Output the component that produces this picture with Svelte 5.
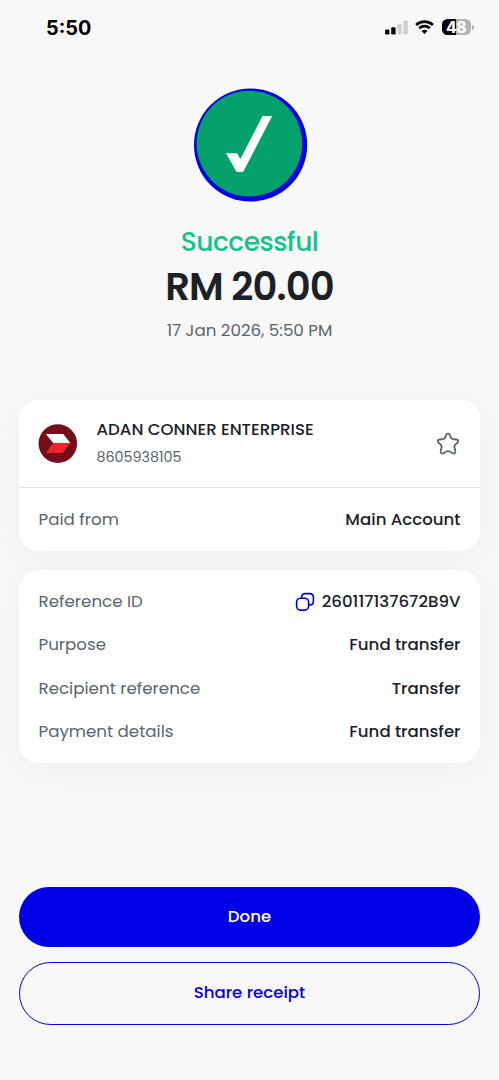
<script lang="ts">
	interface Detail {
		label: string;
		value: string;
		copy?: boolean;
	}

	const details: Detail[] = [
		{ label: 'Reference ID', value: '260117137672B9V', copy: true },
		{ label: 'Purpose', value: 'Fund transfer' },
		{ label: 'Recipient reference', value: 'Transfer' },
		{ label: 'Payment details', value: 'Fund transfer' }
	];
</script>

<div class="screen">
	<header class="status-bar">
		<span class="time">5:50</span>
		<div class="indicators">
			<svg class="signal" width="23" height="15" viewBox="0 0 23 15">
				<rect x="0" y="9.5" width="4.4" height="5" rx="1.2" fill="#000" />
				<rect x="6.2" y="7.2" width="4.4" height="7.3" rx="1.2" fill="#000" />
				<rect x="12.3" y="4" width="4.4" height="10.5" rx="1.2" fill="#d0d0d0" />
				<rect x="18.4" y="0.5" width="4.4" height="14" rx="1.2" fill="#d0d0d0" />
			</svg>
			<svg class="wifi" width="19" height="14" viewBox="0 0 19 14">
				<path d="M1.1 4.9C5.8.4 13.2.4 17.9 4.9" />
				<path d="M4.2 8.2C7.2 5.4 11.8 5.4 14.8 8.2" />
				<path d="M6.5 11C8.2 9.3 10.8 9.3 12.5 11L9.5 13.9Z" fill="#000" stroke="none" />
			</svg>
			<div class="battery">48</div>
		</div>
	</header>

	<section class="summary">
		<svg class="badge" width="114" height="114" viewBox="0 0 114 114">
			<circle cx="56.6" cy="57" r="56.6" fill="#0000e6" />
			<circle cx="55.4" cy="55.6" r="52.8" fill="#05a16b" />
			<path d="M68.5 28H78.2L49.1 84H42.6L32 65.2H43L46.4 71Z" fill="#fff" />
		</svg>
		<h1>Successful</h1>
		<p class="amount">RM 20.00</p>
		<p class="date">17 Jan 2026, 5:50 PM</p>
	</section>

	<section class="card account-card">
		<div class="recipient">
			<svg class="bank" width="40" height="40" viewBox="0 0 40 40">
				<circle cx="19.8" cy="19.6" r="19.3" fill="#730f1a" />
				<path d="M7.8 10H25.3L32.3 19H15.3Z" fill="#fff" />
				<path d="M15.3 19H32.3L24.8 29H7.8Z" fill="#ed2529" />
			</svg>
			<div class="who">
				<span class="name">ADAN CONNER ENTERPRISE</span>
				<span class="number">8605938105</span>
			</div>
			<svg class="star" width="24" height="24" viewBox="0 0 24 24">
				<path
					d="M10.2 2.8C10.9 1.3 13.1 1.3 13.8 2.8L14.8 5.4C15.2 6.5 15.9 7 17 7.1L20.4 7.5C22.2 7.7 22.8 9.6 21.5 10.8L19.2 12.7C18.4 13.4 18.1 14.1 18.4 15.1L19.3 19C19.7 21 18.3 22.1 16.6 21.2L13.5 19.5C12.5 19 11.5 19 10.5 19.5L7.4 21.2C5.7 22.1 4.3 21 4.7 19L5.6 15.1C5.9 14.1 5.6 13.4 4.8 12.7L2.5 10.8C1.2 9.6 1.8 7.7 3.6 7.5L7 7.1C8.1 7 8.8 6.5 9.2 5.4Z"
				/>
			</svg>
		</div>
		<div class="row paid">
			<span class="label">Paid from</span>
			<span class="value">Main Account</span>
		</div>
	</section>

	<section class="card details">
		{#each details as detail}
			<div class="row">
				<span class="label">{detail.label}</span>
				<span class="value">
					{#if detail.copy}
						<svg class="copy" width="20" height="20" viewBox="0 0 20 20">
							<rect x="1.6" y="6.3" width="12" height="11.8" rx="3.8" />
							<path
								d="M6.6 6.2V5.6C6.6 3.2 8.2 1.6 10.4 1.6H14.6C16.8 1.6 18.4 3.2 18.4 5.4V9.2C18.4 11.5 16.8 12.9 14.6 12.9H13.7"
							/>
						</svg>
					{/if}
					<span>{detail.value}</span>
				</span>
			</div>
		{/each}
	</section>

	<footer class="actions">
		<button class="primary">Done</button>
		<button class="secondary">Share receipt</button>
	</footer>
</div>

<style>
	:global(body) {
		background: #f8f8f8;
	}

	.screen {
		box-sizing: border-box;
		display: flex;
		flex-direction: column;
		height: 1080px;
		padding: 0 19px;
		overflow: hidden;
		background: #f8f8f8;
		color: #1b2126;
		font-family: Poppins, Inter, sans-serif;
		font-size: 16.6px;
	}

	.status-bar {
		display: flex;
		align-items: center;
		justify-content: space-between;
		height: 54px;
		padding: 0 7px 0 27px;
		color: #000;
		font-family: Inter, sans-serif;
	}

	.time {
		padding-top: 1px;
		font-size: 19.8px;
		font-weight: 700;
	}

	.indicators {
		display: flex;
		align-items: center;
		gap: 7.5px;
		margin-right: 1px;
	}

	.wifi {
		fill: none;
		stroke: #000;
		stroke-width: 2.7;
	}

	.battery {
		position: relative;
		width: 29px;
		height: 16px;
		margin-right: 1.5px;
		border-radius: 5.5px;
		background: linear-gradient(90deg, #000 49%, #b4b4b4 49%);
		color: #fff;
		font-size: 15.5px;
		font-weight: 800;
		letter-spacing: -0.4px;
		line-height: 17.5px;
		text-align: center;
	}

	.battery::after {
		content: '';
		position: absolute;
		top: 5.5px;
		right: -3px;
		width: 2px;
		height: 5px;
		border-radius: 0 2px 2px 0;
		background: #b4b4b4;
	}

	.summary {
		display: flex;
		flex-direction: column;
		align-items: center;
		height: 312px;
		padding-top: 34px;
	}

	.badge {
		margin-left: 2px;
	}

	h1 {
		margin: 24px 0 0;
		color: #12c48b;
		font-size: 26.5px;
		font-weight: 500;
		letter-spacing: -0.5px;
		line-height: 32px;
	}

	.amount {
		margin: 6px 0 0;
		font-size: 38.6px;
		font-weight: 600;
		letter-spacing: -0.85px;
		line-height: 46px;
	}

	.date {
		margin: 10px 0 0;
		color: #5b656e;
		font-size: 16.7px;
		line-height: 20px;
	}

	.card {
		border-radius: 20px;
		background: #fff;
		box-shadow: 0 8px 28px rgba(60, 80, 130, 0.05);
	}

	.account-card {
		height: 151px;
	}

	.recipient {
		box-sizing: border-box;
		display: flex;
		align-items: center;
		height: 88px;
		padding: 0 20px 0 18.5px;
		border-bottom: 1px solid #e2e4e6;
	}

	.who {
		display: flex;
		flex: 1;
		flex-direction: column;
		gap: 7px;
		margin-left: 19px;
	}

	.name {
		font-weight: 500;
		line-height: 20px;
	}

	.number {
		color: #5b656e;
		font-size: 14.3px;
		line-height: 20px;
	}

	.star {
		fill: none;
		stroke: #5b656e;
		stroke-width: 1.8;
	}

	.row {
		display: flex;
		align-items: center;
		justify-content: space-between;
		height: 43.3px;
		padding: 0 19.5px;
	}

	.paid {
		height: 63px;
	}

	.label {
		margin-top: -1px;
		color: #5b656e;
		font-size: 16.7px;
	}

	.value {
		display: flex;
		align-items: center;
		gap: 7px;
		font-weight: 500;
	}

	.copy {
		fill: none;
		stroke: #0000e6;
		stroke-width: 1.6;
	}

	.details {
		box-sizing: border-box;
		height: 193px;
		margin-top: 19px;
		padding-top: 10px;
	}

	.actions {
		display: flex;
		flex-direction: column;
		gap: 15px;
		margin-top: 124px;
	}

	button {
		box-sizing: border-box;
		padding: 0 0 2px;
		border: 0;
		border-radius: 32px;
		font: inherit;
		font-weight: 500;
	}

	.primary {
		height: 60px;
		background: #0000e6;
		color: #fff;
	}

	.secondary {
		height: 63px;
		border: 1px solid #0000e6;
		background: transparent;
		color: #0000e6;
	}
</style>
